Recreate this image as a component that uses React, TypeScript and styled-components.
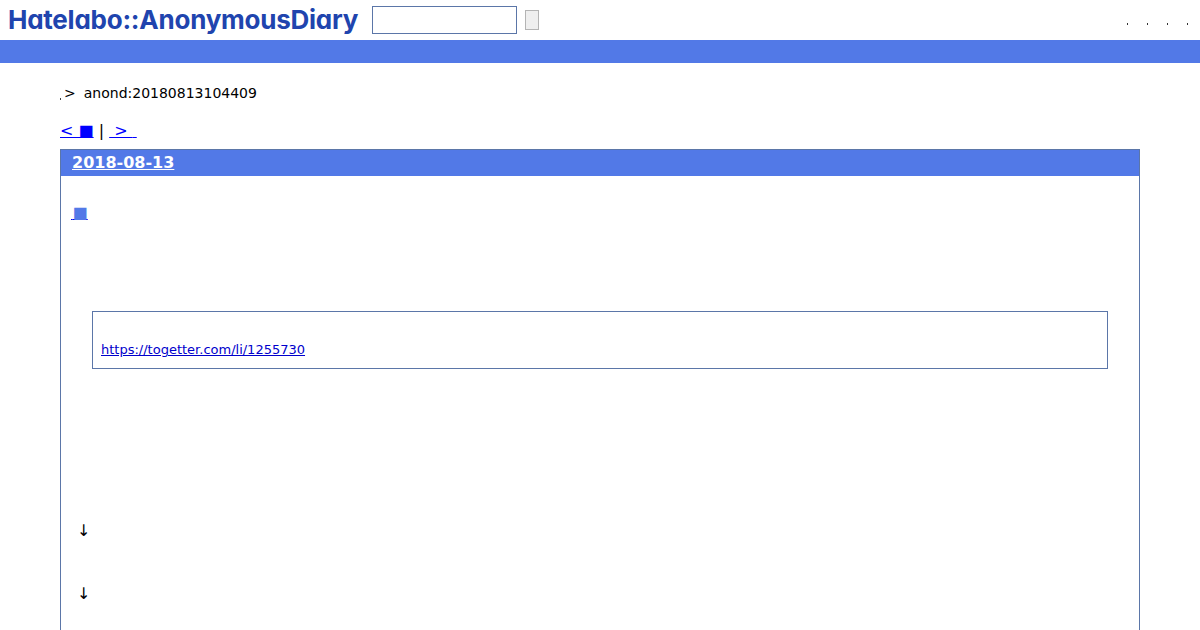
import React from "react";
import styled, { createGlobalStyle } from "styled-components";

const GlobalStyle = createGlobalStyle`
  html, body {
    margin: 0;
    padding: 0;
    height: 630px;
    overflow: hidden;
    background: #fff;
    color: #000;
    font-family: "DejaVu Sans", sans-serif;
    font-size: 14px;
  }
`;

const Header = styled.header`
  display: flex;
  align-items: center;
  height: 40px;
  padding-left: 8px;
`;

const Logo = styled.div`
  width: 364px;
  margin-top: -2px;
  font-family: Inter, "Liberation Sans", sans-serif;
  font-feature-settings: "cv11" 1;
  font-weight: 700;
  font-size: 26px;
  letter-spacing: -0.24px;
  white-space: nowrap;
  color: #2044ae;
`;

const SearchInput = styled.input`
  box-sizing: border-box;
  width: 145px;
  height: 28px;
  border: 1px solid #5b76a8;
  background: #fff;
  padding: 0;
`;

const SearchButton = styled.button`
  box-sizing: border-box;
  width: 14px;
  height: 20px;
  margin-left: 8px;
  border: 1px solid #b4b4b4;
  background: #efefef;
  padding: 0;
`;

const HeaderLinks = styled.nav`
  display: flex;
  gap: 19px;
  margin-left: auto;
  padding: 8px 12px 0 0;
`;

const Tick = styled.span`
  width: 1px;
  height: 2px;
  background: #333;
`;

const Bar = styled.div`
  height: 23px;
  background: #5279e7;
`;

const Main = styled.main`
  padding: 0 60px;
`;

const Breadcrumb = styled.div`
  display: flex;
  align-items: baseline;
  height: 20px;
  margin-top: 20px;
  line-height: 20px;
`;

const Dot = styled.span`
  align-self: flex-end;
  width: 1px;
  height: 2px;
  margin: 0 3px 3px 0;
  background: #444;
`;

const Crumb = styled.span`
  margin-left: ${(p: { $gap?: number }) => p.$gap ?? 0}px;
`;

const Pager = styled.div`
  height: 20px;
  margin-top: 18px;
  line-height: 20px;
  font-size: 16px;
  white-space: pre;
`;

const PagerLink = styled.a`
  color: #0000ff;
  text-decoration: underline;
`;

const Section = styled.section`
  margin-top: 8px;
  border: 1px solid #5b76a8;
  border-bottom: 0;
  height: 500px;
`;

const DateTitle = styled.h2`
  margin: 0;
  height: 26px;
  padding-left: 11px;
  background: #5279e7;
  font-size: 16px;
  font-weight: 700;
  line-height: 26px;

  a {
    color: #fff;
    text-decoration: underline;
  }
`;

const EntryLink = styled.a`
  display: block;
  width: fit-content;
  margin: 27px 0 0 10px;
  height: 20px;
  line-height: 20px;
  font-size: 16px;
  white-space: pre;
  color: #5279e7;
  text-decoration: underline;
  text-decoration-color: #0000ee;
`;

const Quote = styled.blockquote`
  box-sizing: border-box;
  height: 58px;
  margin: 88px 31px 0;
  padding: 29px 8px 0;
  border: 1px solid #5b76a8;
  font-size: 13px;
  line-height: 18px;

  a {
    color: #0000cc;
  }
`;

const Arrow = styled.p`
  margin: ${(p: { $top: number }) => p.$top}px 0 0 16px;
  height: 20px;
  line-height: 20px;
  font-size: 16px;
`;

export default function App() {
  return (
    <>
      <GlobalStyle />
      <Header>
        <Logo>Hatelabo::AnonymousDiary</Logo>
        <SearchInput />
        <SearchButton />
        <HeaderLinks>
          <Tick />
          <Tick />
          <Tick />
          <Tick />
        </HeaderLinks>
      </Header>
      <Bar />
      <Main>
        <Breadcrumb>
          <Dot />
          <span>&gt;</span>
          <Crumb $gap={8}>anond:20180813104409</Crumb>
        </Breadcrumb>
        <Pager>
          <PagerLink>&lt; ■</PagerLink> | <PagerLink> &gt; {"\u2005"}</PagerLink>
        </Pager>
        <Section>
          <DateTitle>
            <a>2018-08-13</a>
          </DateTitle>
          <EntryLink>{"\u200a"}■</EntryLink>
          <Quote>
            <a href="#">https://togetter.com/li/1255730</a>
          </Quote>
          <Arrow $top={152}>↓</Arrow>
          <Arrow $top={43}>↓</Arrow>
        </Section>
      </Main>
    </>
  );
}
